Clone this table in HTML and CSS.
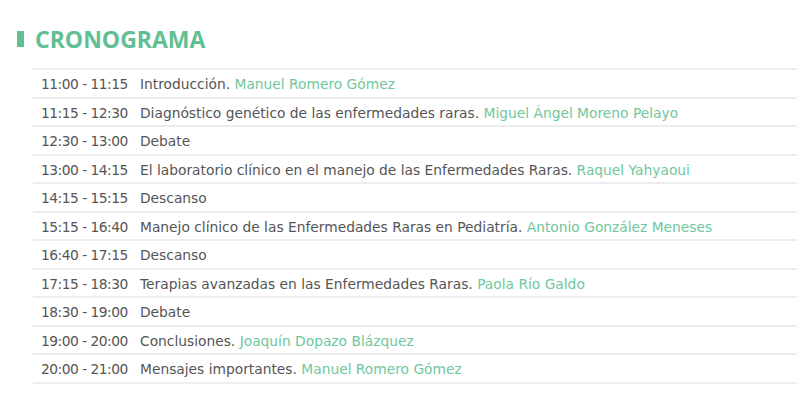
FILE: index.html
```html
<!DOCTYPE html>
<html lang="es">
<head>
<meta charset="utf-8">
<link rel="stylesheet" href="styles.css">
</head>
<body>
<section class="crono">
  <h2 class="title"><span class="mark"></span>CRONOGRAMA</h2>
  <div class="table">
    <div class="row"><span class="time">11:00 - 11:15</span><span class="desc">Introducción. <span class="who">Manuel Romero Gómez</span></span></div>
    <div class="row"><span class="time">11:15 - 12:30</span><span class="desc">Diagnóstico genético de las enfermedades raras. <span class="who">Miguel Ángel Moreno Pelayo</span></span></div>
    <div class="row"><span class="time">12:30 - 13:00</span><span class="desc">Debate</span></div>
    <div class="row"><span class="time">13:00 - 14:15</span><span class="desc">El laboratorio clínico en el manejo de las Enfermedades Raras. <span class="who">Raquel Yahyaoui</span></span></div>
    <div class="row"><span class="time">14:15 - 15:15</span><span class="desc">Descanso</span></div>
    <div class="row"><span class="time">15:15 - 16:40</span><span class="desc">Manejo clínico de las Enfermedades Raras en Pediatría. <span class="who">Antonio González Meneses</span></span></div>
    <div class="row"><span class="time">16:40 - 17:15</span><span class="desc">Descanso</span></div>
    <div class="row"><span class="time">17:15 - 18:30</span><span class="desc">Terapias avanzadas en las Enfermedades Raras. <span class="who">Paola Río Galdo</span></span></div>
    <div class="row"><span class="time">18:30 - 19:00</span><span class="desc">Debate</span></div>
    <div class="row"><span class="time">19:00 - 20:00</span><span class="desc">Conclusiones. <span class="who">Joaquín Dopazo Blázquez</span></span></div>
    <div class="row"><span class="time">20:00 - 21:00</span><span class="desc">Mensajes importantes. <span class="who">Manuel Romero Gómez</span></span></div>
  </div>
</section>
</body>
</html>
```
FILE: styles.css
```css
html, body {
  margin: 0;
  padding: 0;
  background: #fff;
}
.crono {
  padding: 24px 0 0 17px;
}
.title {
  display: flex;
  align-items: center;
  gap: 11px;
  margin: 0;
  height: 30px;
  font-family: "Open Sans", sans-serif;
  font-weight: 700;
  font-size: 23px;
  color: #62be93;
}
.mark {
  width: 7px;
  height: 16px;
  background: #62be93;
}
.table {
  margin: 14px 0 0 16px;
  border-top: 2px solid #ececf1;
  font-family: "DejaVu Sans", sans-serif;
  font-size: 13.8px;
  color: #555;
}
.row {
  display: flex;
  align-items: center;
  box-sizing: border-box;
  height: 28.5px;
  padding-top: 2px;
  border-bottom: 2px solid #ececf1;
}
.time {
  width: 99px;
  padding-left: 8px;
  flex-shrink: 0;
  letter-spacing: -0.5px;
}
.who {
  color: #6fc79c;
}
```
